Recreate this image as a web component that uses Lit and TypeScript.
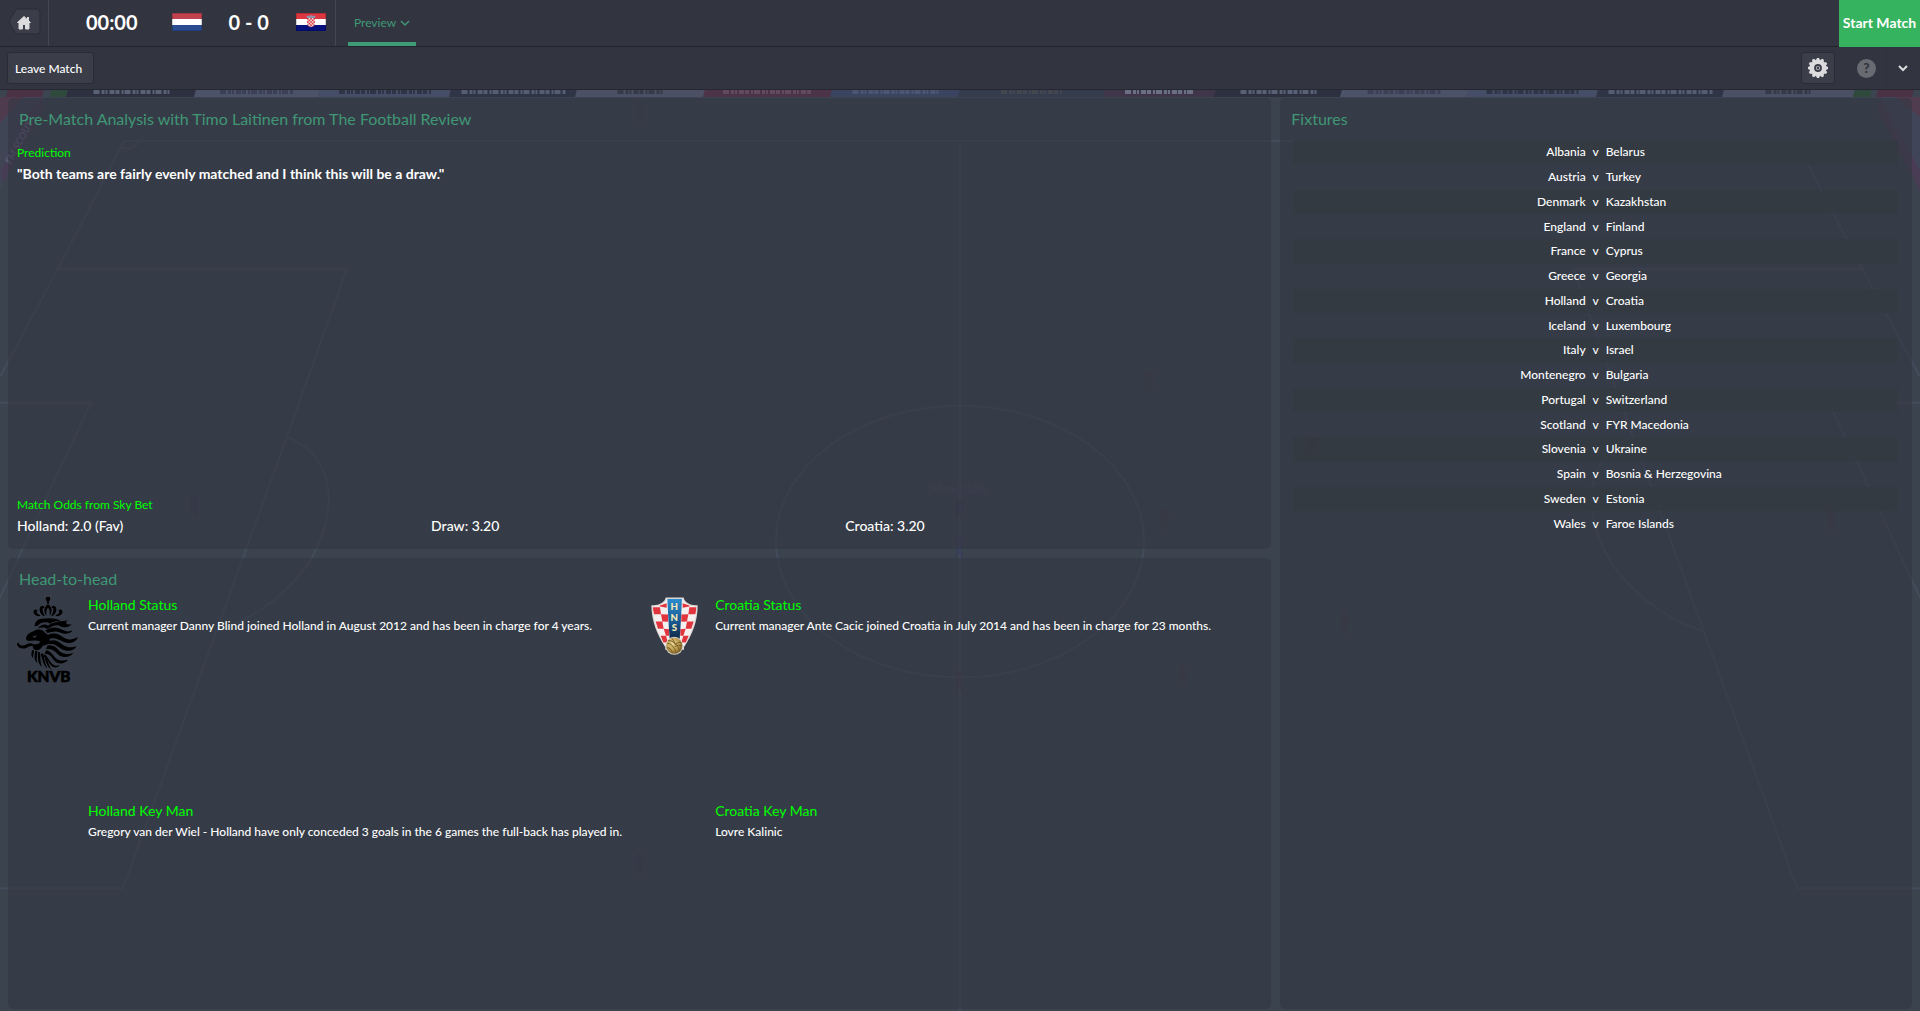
import { LitElement, html, svg, css } from "lit";
import { customElement } from "lit/decorators.js";

const fixtures: [string, string][] = [
  ["Albania", "Belarus"],
  ["Austria", "Turkey"],
  ["Denmark", "Kazakhstan"],
  ["England", "Finland"],
  ["France", "Cyprus"],
  ["Greece", "Georgia"],
  ["Holland", "Croatia"],
  ["Iceland", "Luxembourg"],
  ["Italy", "Israel"],
  ["Montenegro", "Bulgaria"],
  ["Portugal", "Switzerland"],
  ["Scotland", "FYR Macedonia"],
  ["Slovenia", "Ukraine"],
  ["Spain", "Bosnia & Herzegovina"],
  ["Sweden", "Estonia"],
  ["Wales", "Faroe Islands"],
];

const odds = ["Holland: 2.0 (Fav)", "Draw: 3.20", "Croatia: 3.20"];

/* Advertising boards along the far touchline: start, end, fill, lettering width, lettering colour. */
const boards: [number, number, string, number, string][] = [
  [8, 42, "#4b3144", 0, ""],
  [52, 66, "#2f4a3c", 0, ""],
  [68, 195, "#2c303f", 76, "#596176"],
  [196, 318, "#4c5268", 74, "#3c4054"],
  [320, 450, "#454e66", 92, "#2f3446"],
  [451, 576, "#2f3446", 104, "#555d73"],
  [577, 704, "#4b5064", 46, "#353a4b"],
  [705, 831, "#4d3347", 90, "#5f4a60"],
  [832, 959, "#3a4460", 86, "#4c5673"],
  [960, 1104, "#353c4d", 62, "#43454f"],
  [1105, 1215, "#403649", 70, "#6b6f83"],
  [1216, 1341, "#2c303f", 76, "#596176"],
  [1342, 1467, "#4c5268", 74, "#3c4054"],
  [1468, 1597, "#454e66", 92, "#2f3446"],
  [1598, 1723, "#2f3446", 104, "#555d73"],
  [1724, 1853, "#4b5064", 46, "#353a4b"],
  [1855, 1870, "#2f4a3c", 0, ""],
  [1878, 1912, "#4b3144", 0, ""],
];

const players: [number, number, string][] = [
  [195, 505, "#343352"],
  [640, 863, "#343352"],
  [960, 508, "#343352"],
  [960, 546, "#343360"],
  [640, 110, "#3d3850"],
  [960, 680, "#43334a"],
  [1165, 518, "#46323f"],
  [1183, 675, "#46323f"],
  [1311, 445, "#46323f"],
  [1345, 620, "#46323f"],
  [1832, 520, "#46323f"],
  [1150, 380, "#46323f"],
];

const halfPitch = svg`
  <path d="M960 140H124L58 268L0 376M58 268H347L287 436L123 888H0M0 402H91L45 500L0 597M287 436C325 452 334 486 326 520C316 570 272 612 214 632M138 140C136 148 130 148 121 147"/>`;

const pitch = svg`
  <svg class="pitch" viewBox="0 88 1920 923" preserveAspectRatio="none" aria-hidden="true">
    <rect x="0" y="88" width="1920" height="10" fill="#3c4452"/>
    ${boards.map(
      ([a, b, fill, w, ink]) => svg`
      <path d="M${a} 88H${b + 2}L${b} 96H${a - 2}Z" fill=${fill}/>
      <path d="M${(a + b - w) / 2} 91h${w}" fill="none" stroke=${ink || "none"} stroke-width="4" stroke-dasharray="6 2 3 1 2 2 5 1 4 2 2 1"/>`,
    )}
    <rect x="0" y="88" width="1920" height="1" fill="#252833"/>
    <path d="M0 96H45L30 130L0 190Z" fill="#43465a" opacity=".7"/>
    <path d="M0 96H24L0 122Z" fill="#54384c" opacity=".7"/>
    <path d="M28 112L42 96L43 110L4 182L0 172Z" fill="#493b54" opacity=".7"/>
    <path d="M1880 96H1920V190L1900 146Z" fill="#43465e" opacity=".7"/>
    <path d="M1896 96H1920V116Z" fill="#54384c" opacity=".8"/>
    <path d="M1880 96L1920 170V190L1877 108Z" fill="#523754" opacity=".6"/>
    <g fill="none" stroke="#4c566c" stroke-width="2" opacity=".45">
      ${halfPitch}
      <g transform="translate(1920 0) scale(-1 1)">${halfPitch}</g>
      <path d="M960 140V1011"/>
      <ellipse cx="960" cy="541" rx="184" ry="136"/>
    </g>
    ${players.map(
      ([x, y, c]) => svg`
      <path d="M${x} ${y - 11}l3 5l1 6l-2 4l1 8h-2l-2 -6l-2 5h-2l1 -9l-1 -6l2 -5Z" fill=${c} opacity=".35"/>`,
    )}
    <text x="960" y="492" text-anchor="middle" font-family="Lato, sans-serif" font-size="12" fill="#454862">Mandzukic</text>
    <text transform="translate(11 164) rotate(-62)" font-family="Lato, sans-serif" font-size="10" font-weight="900" font-style="italic" fill="#5c6078">FM SCOUT</text>
  </svg>`;

const chevron = (weight: number) => svg`
  <svg class="chevron" viewBox="0 0 12 8" aria-hidden="true">
    <path d="M2 2l4 4l4-4" fill="none" stroke="currentColor" stroke-width=${weight}/>
  </svg>`;

const homeIcon = html`
  <svg class="home-shape" viewBox="0 0 34 28" aria-hidden="true">
    <path d="M10 1H29Q32 1 32 4V23Q32 26 29 26H10Q8 26 7 24L2 16Q1 13.500 2 11L7 3Q8 1 10 1Z" fill="#3b3d49" stroke="#292b35"/>
    <path d="M16 8.500L22.500 14.500H21V21H17.500V16.500H14.500V21H11V14.500H9.500Z" fill="#dcdcde" stroke="#dcdcde" stroke-linejoin="round"/>
    <rect x="19" y="9" width="2" height="4" fill="#dcdcde"/>
  </svg>`;

const teeth = Array.from({ length: 12 }, (_, i) => i * 30);
const gearIcon = html`
  <svg class="gear" viewBox="-11 -11 22 22" aria-hidden="true">
    <g fill="#dcdcde">
      ${teeth.map((a) => svg`<path d="M-2.500 -7L-1 -10H1L2.500 -7Z" transform="rotate(${a})"/>`)}
      <circle r="7.800"/>
    </g>
    <circle r="3" fill="#dcdcde" stroke="#3b3d49" stroke-width="1.800"/>
    <circle r="1.400" fill="#3b3d49"/>
  </svg>`;

const hollandFlag = html`
  <svg class="flag" viewBox="0 0 30 18" role="img" aria-label="Holland">
    <rect width="30" height="6" fill="#c1424e"/>
    <rect y="6" width="30" height="6" fill="#fff"/>
    <rect y="12" width="30" height="6" fill="#2a4c93"/>
    <rect x=".5" y=".5" width="29" height="17" fill="none" stroke="#000" stroke-opacity=".18"/>
  </svg>`;

const checks = (cols: number, rows: number, x: number, y: number, w: number, h: number, c: string) =>
  Array.from({ length: cols * rows }, (_, i) => [i % cols, Math.floor(i / cols)])
    .filter(([a, b]) => (a + b) % 2 === 0)
    .map(([a, b]) => svg`<rect x=${x + a * w} y=${y + b * h} width=${w} height=${h} fill=${c}/>`);

const croatiaFlag = html`
  <svg class="flag" viewBox="0 0 30 18" role="img" aria-label="Croatia">
    <defs><clipPath id="arms"><path d="M11 5H19V10Q19 13.500 15 14Q11 13.500 11 10Z"/></clipPath></defs>
    <rect width="30" height="6" fill="#dc3640"/>
    <rect y="6" width="30" height="6" fill="#fff"/>
    <rect y="12" width="30" height="6" fill="#06117c"/>
    <path d="M10.500 3L12 2.500L13 3L15 2L17 3L18 2.500L19.500 3L19 6H11Z" fill="#8d93ab"/>
    <g clip-path="url(#arms)">
      <rect x="11" y="5" width="8" height="9" fill="#f6dcdc"/>
      ${checks(5, 6, 11, 5, 1.6, 1.6, "#d8343c")}
    </g>
    <rect x=".5" y=".5" width="29" height="17" fill="none" stroke="#000" stroke-opacity=".18"/>
  </svg>`;

const hollandCrest = html`
  <svg class="crest-holland" viewBox="21 18 183 258" role="img" aria-label="KNVB">
    <g fill="#000">
      <circle cx="114" cy="24" r="7"/>
      <path d="M111 30h6v8h-6z"/>
      <path d="M109 75C100 62 101 48 114 40C127 48 128 62 119 75C120 62 119 54 114 50C109 54 108 62 109 75Z"/>
      <path d="M100 75C88 66 85 52 94 45C100 43 104 47 103 51C97 50 95 58 104 74Z"/>
      <path d="M128 75C140 66 143 52 134 45C128 43 124 47 125 51C131 50 133 58 124 74Z"/>
      <path d="M87 76C74 74 66 64 73 57C78 53 84 57 82 61C77 62 80 68 92 74Z"/>
      <path d="M141 76C154 74 162 64 155 57C150 53 144 57 146 61C151 62 148 68 136 74Z"/>
      <path d="M74 106C74 92 84 82 98 83C112 82 140 78 154 92C136 88 128 92 120 98C112 92 92 92 84 104Z"/>
      <path d="M84 112C92 100 106 98 114 104C128 92 152 92 176 88C162 92 168 104 186 100C174 112 160 110 148 104C134 100 124 108 114 114C104 108 94 108 84 112Z"/>
      <path d="M106 118C120 112 132 106 146 112C160 118 172 126 188 118C178 132 160 130 148 124C136 118 124 124 112 126Z"/>
      <path d="M48 142C50 128 62 124 72 120C84 112 98 116 104 124C108 130 116 130 118 138C116 146 124 150 116 158C108 164 100 160 96 168C92 176 82 180 74 176C68 172 66 166 72 160C80 160 90 158 90 152C80 146 66 150 58 150C52 150 48 148 48 142Z"/>
      <path d="M21 158C22 152 28 156 28 160C34 166 42 164 50 160C60 154 70 158 78 166C66 162 58 166 50 170C40 176 22 172 21 158Z"/>
      <path d="M114 132C130 124 146 128 158 138C172 148 186 148 204 138C196 156 178 160 160 152C146 146 134 138 116 144Z"/>
      <path d="M118 150C134 144 146 152 156 160C172 172 184 170 200 166C190 182 170 182 154 174C142 166 134 156 116 160Z"/>
      <path d="M112 164C128 160 138 168 146 178C158 192 174 190 190 186C180 200 160 202 146 192C136 182 128 172 108 174Z"/>
      <path d="M108 178C122 180 126 190 136 200C146 210 160 210 174 206C164 220 144 222 132 208C124 198 120 188 104 188Z"/>
      <path d="M102 190C114 196 116 208 126 218C132 224 142 226 150 222C142 234 126 230 120 220C112 208 110 198 98 198Z"/>
      <path d="M98 186C104 200 104 218 112 232C98 222 98 204 92 190Z"/>
      <path d="M108 200C116 212 116 226 126 236C112 230 110 216 104 204Z"/>
      <path d="M90 184C92 200 90 214 96 228C82 218 84 200 84 184Z"/>
      <path d="M82 180C82 194 78 204 82 216C70 206 74 192 76 180Z"/>
      <path d="M72 178C72 188 68 194 70 202C60 194 66 184 66 178Z"/>
    </g>
    <path d="M66 138L80 132L76 140Z" fill="#373c47"/>
    <text x="116" y="272" text-anchor="middle" font-family="Lato, sans-serif" font-weight="900" font-size="46" stroke="#000" stroke-width="2">KNVB</text>
  </svg>`;

const croatiaCrest = html`
  <svg class="crest-croatia" viewBox="33 22 141 173" role="img" aria-label="HNS">
    <defs>
      <linearGradient id="band" x1="0" y1="0" x2="0" y2="1">
        <stop offset="0" stop-color="#2d8fd0"/><stop offset=".5" stop-color="#1a5c96"/><stop offset="1" stop-color="#0b1d33"/>
      </linearGradient>
      <radialGradient id="ball" cx=".4" cy=".35" r=".7">
        <stop offset="0" stop-color="#ecd894"/><stop offset=".6" stop-color="#b9984a"/><stop offset="1" stop-color="#6d5424"/>
      </radialGradient>
      <clipPath id="shield"><path d="M80 27H128C132 40 150 52 170 50C168 92 156 128 132 168H76C52 128 40 92 38 50C58 52 76 40 80 27Z"/></clipPath>
    </defs>
    <path d="M77 23H131C134 38 152 48 173 46C173 94 158 132 132 172V180H76V172C50 132 35 94 34 46C56 48 74 38 77 23Z" fill="#ded8d6"/>
    <g clip-path="url(#shield)">
      <rect x="34" y="22" width="140" height="160" fill="#f4f0f0"/>
      <path d="M58 48L80 40V54L60 50ZM38 52H60L63 73H42ZM63 73L84 74V96L67 95ZM47 95H67L71 117H54ZM71 117L87 118V138L78 138ZM62 138H78L84 158H70Z" fill="#e2343c"/>
      <path d="M150 48L128 40V54L148 50ZM170 52H148L145 73H166ZM145 73L124 74V96L141 95ZM161 95H141L137 117H154ZM137 117L121 118V138L130 138ZM146 138H130L124 158H138Z" fill="#e2343c"/>
      <path d="M82 24H126C124 70 122 110 118 160H90C86 110 84 70 82 24Z" fill="url(#band)"/>
    </g>
    <g font-family="Lato, sans-serif" font-weight="900" font-size="29" text-anchor="middle" fill="#f3e9b8">
      <text x="103" y="62">H</text>
      <text x="103" y="93">N</text>
      <text x="103" y="124">S</text>
    </g>
    <circle cx="103" cy="168" r="27" fill="#d9d2c6"/>
    <circle cx="103" cy="168" r="24" fill="url(#ball)"/>
    <path d="M82 160Q98 160 110 190M84 152Q108 152 120 184M96 146Q104 156 106 164Q118 154 124 158M104 170Q114 164 126 168M80 174Q92 172 98 190" fill="none" stroke="#7a602a" stroke-width="3"/>
  </svg>`;

const teams = [
  {
    name: "Holland",
    crest: hollandCrest,
    status: "Current manager Danny Blind joined Holland in August 2012 and has been in charge for 4 years.",
    keyMan: "Gregory van der Wiel - Holland have only conceded 3 goals in the 6 games the full-back has played in.",
  },
  {
    name: "Croatia",
    crest: croatiaCrest,
    status: "Current manager Ante Cacic joined Croatia in July 2014 and has been in charge for 23 months.",
    keyMan: "Lovre Kalinic",
  },
];

@customElement("app-root")
export class AppRoot extends LitElement {
  static styles = css`
    :host {
      display: flex;
      flex-direction: column;
      min-height: 100vh;
      background: #3b444e;
      color: #fff;
      font: 500 12px/16px Lato, sans-serif;
    }
    * {
      box-sizing: border-box;
    }
    h2, h3, p, ul {
      margin: 0;
      padding: 0;
    }
    button {
      display: flex;
      align-items: center;
      margin: 0;
      padding: 0;
      border: 0;
      background: none;
      color: inherit;
      font: inherit;
      cursor: pointer;
    }
    svg {
      display: block;
    }
    .topbar {
      display: flex;
      height: 47px;
      border-bottom: 1px solid #21232d;
      background: #32343f;
    }
    .home {
      width: 49px;
      padding-left: 8px;
      border-right: 1px solid #454751;
    }
    .home-shape {
      width: 34px;
      height: 28px;
      margin-bottom: 3px;
    }
    .score {
      display: flex;
      align-items: center;
      gap: 27px;
      padding: 0 9px 2px 37px;
      border-right: 1px solid #454751;
      font-size: 20px;
      line-height: 24px;
      font-weight: 700;
    }
    .clock {
      margin-right: 7px;
    }
    .flag {
      width: 30px;
      height: 18px;
    }
    .tabs {
      display: flex;
      flex: 1;
      padding-left: 12px;
    }
    .tab {
      gap: 3px;
      padding: 0 5px 0 6px;
      border-top: 4px solid transparent;
      border-bottom: 4px solid #3f9a77;
      color: #3f9a77;
      font-weight: 400;
    }
    .chevron {
      width: 12px;
      height: 8px;
    }
    .start {
      justify-content: center;
      width: 81px;
      height: 47px;
      padding-bottom: 1px;
      background: #36b35f;
      font-size: 14px;
      font-weight: 700;
      white-space: nowrap;
    }
    .toolbar {
      display: flex;
      align-items: center;
      justify-content: space-between;
      height: 42px;
      padding: 0 11px 0 7px;
      background: #32343f;
    }
    .boxed {
      height: 32px;
      border: 1px solid #292b35;
      border-radius: 3px;
      background: #3b3d49;
    }
    .leave {
      padding: 2px 11px 0 7px;
    }
    .tools {
      display: flex;
      align-items: center;
    }
    .settings {
      justify-content: center;
      width: 34px;
    }
    .gear {
      width: 22px;
      height: 22px;
    }
    .help {
      justify-content: center;
      width: 19px;
      height: 19px;
      margin: 0 10px 0 22px;
      border-radius: 50%;
      background: #696b72;
      color: #32343f;
      font-size: 14px;
      font-weight: 900;
    }
    .more {
      height: 42px;
      padding-left: 10px;
      border-left: 1px solid #2f313b;
      color: #dcdcde;
    }
    .stage {
      position: relative;
      display: grid;
      flex: 1;
      grid-template-columns: 2fr 1fr;
      padding: 9px 8px 2px;
      gap: 9px;
    }
    .pitch {
      position: absolute;
      inset: 0;
      width: 100%;
      height: 100%;
    }
    .column {
      position: relative;
      display: flex;
      flex-direction: column;
      gap: 9px;
    }
    .panel {
      display: flex;
      flex: 1 1 0;
      flex-direction: column;
      padding: 9px 12px 3px 9px;
      border-radius: 5px;
      background: rgba(52, 55, 67, 0.6);
    }
    .title {
      padding: 0 2px;
      color: #3f9775;
      font-size: 16px;
      line-height: 24px;
      font-weight: 400;
    }
    .label {
      color: #0f0;
      font-size: 12px;
      line-height: 20px;
      font-weight: 400;
    }
    .label.large {
      font-size: 14px;
    }
    .line {
      line-height: 22px;
    }
    .prediction {
      flex: 1;
      padding-top: 12px;
    }
    .quote {
      font-size: 14px;
      line-height: 22px;
      font-weight: 700;
    }
    .odds {
      display: grid;
      grid-template-columns: repeat(3, 1fr);
      margin-bottom: 9px;
      list-style: none;
      font-size: 14px;
      line-height: 22px;
    }
    .head-to-head {
      padding-right: 0;
    }
    .teams {
      display: grid;
      flex: 1;
      grid-template-columns: 1fr 1fr;
    }
    .team {
      display: grid;
      grid-template-columns: 61px 1fr;
      column-gap: 10px;
    }
    .crest {
      display: flex;
      justify-content: center;
      align-items: flex-start;
      padding-top: 6px;
    }
    .crest svg {
      overflow: visible;
    }
    .crest-holland {
      width: 61px;
      height: 86px;
    }
    .crest-croatia {
      width: 47px;
      height: 58px;
    }
    .facts {
      display: grid;
      grid-template-rows: 1fr 1fr;
      padding-top: 4px;
    }
    .fixtures {
      padding-right: 14px;
    }
    .fixture-list {
      width: calc(100% - 4px);
      height: 396px;
      margin: 9px 0 0 4px;
      border-collapse: collapse;
      table-layout: fixed;
    }
    .fixture-list tr:nth-child(odd) {
      background: rgba(48, 54, 60, 0.4);
    }
    .fixture-list td {
      padding: 0;
    }
    .fixture-list .home-side {
      text-align: right;
    }
    .fixture-list .versus {
      width: 20px;
      text-align: center;
    }
  `;

  render() {
    return html`
      <header class="topbar">
        <button class="home" aria-label="Home">${homeIcon}</button>
        <div class="score">
          <span class="clock">00:00</span>
          ${hollandFlag}
          <span>0 - 0</span>
          ${croatiaFlag}
        </div>
        <nav class="tabs"><button class="tab">Preview ${chevron(1.4)}</button></nav>
        <button class="start">Start Match</button>
      </header>
      <div class="toolbar">
        <button class="boxed leave">Leave Match</button>
        <div class="tools">
          <button class="boxed settings" aria-label="Settings">${gearIcon}</button>
          <button class="help" aria-label="Help">?</button>
          <button class="more" aria-label="More">${chevron(2)}</button>
        </div>
      </div>
      <main class="stage">
        ${pitch}
        <div class="column">
          <section class="panel">
            <h2 class="title">Pre-Match Analysis with Timo Laitinen from The Football Review</h2>
            <div class="prediction">
              <h3 class="label">Prediction</h3>
              <p class="quote">"Both teams are fairly evenly matched and I think this will be a draw."</p>
            </div>
            <h3 class="label">Match Odds from Sky Bet</h3>
            <ul class="odds">
              ${odds.map((o) => html`<li>${o}</li>`)}
            </ul>
          </section>
          <section class="panel head-to-head">
            <h2 class="title">Head-to-head</h2>
            <div class="teams">
              ${teams.map(
                (t) => html`
                  <article class="team">
                    <div class="crest">${t.crest}</div>
                    <div class="facts">
                      <div>
                        <h3 class="label large">${t.name} Status</h3>
                        <p class="line">${t.status}</p>
                      </div>
                      <div>
                        <h3 class="label large">${t.name} Key Man</h3>
                        <p class="line">${t.keyMan}</p>
                      </div>
                    </div>
                  </article>
                `,
              )}
            </div>
          </section>
        </div>
        <div class="column">
          <section class="panel fixtures">
            <h2 class="title">Fixtures</h2>
            <table class="fixture-list">
              <tbody>
                ${fixtures.map(
                  ([home, away]) => html`
                    <tr>
                      <td class="home-side">${home}</td>
                      <td class="versus">v</td>
                      <td>${away}</td>
                    </tr>
                  `,
                )}
              </tbody>
            </table>
          </section>
        </div>
      </main>
    `;
  }
}
